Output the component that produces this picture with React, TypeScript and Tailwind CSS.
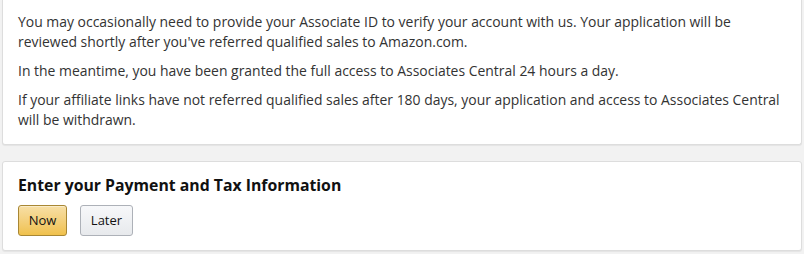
import React from "react";

export default function App() {
  return (
    <div className="w-[804px] h-[254px] bg-[#f2f2f2] overflow-hidden px-[2px] text-[#333]" style={{ fontFamily: '"Open Sans", "Noto Sans", Arial, sans-serif' }}>
      <div className="bg-white border border-t-0 border-[#ddd] rounded-b-[3px] shadow-[0_1px_1px_rgba(0,0,0,0.06)] px-[15px] pt-[12px] pb-[14px] text-[13.94px] leading-[20px]">
        <p className="mb-[9px]">
          You may occasionally need to provide your Associate ID to verify your account with us. Your application will be reviewed shortly after you've referred qualified sales to Amazon.com.
        </p>
        <p className="mb-[9px]">In the meantime, you have been granted the full access to Associates Central 24 hours a day.</p>
        <p>
          If your affiliate links have not referred qualified sales after 180 days, your application and access to Associates Central will be withdrawn.
        </p>
      </div>
      <div className="mt-[16px] bg-white border border-[#ddd] rounded-[3px] shadow-[0_1px_1px_rgba(0,0,0,0.06)] px-[15px] pt-[12px] pb-[14px]">
        <h2 className="text-[15.8px] leading-[22px] font-bold text-[#111]">Enter your Payment and Tax Information</h2>
        <div className="flex gap-[13px] mt-[9px]">
          <button className="h-[31px] w-[49px] rounded-[3px] border border-[#a88734] bg-gradient-to-b from-[#f7dfa5] to-[#f0c14b] text-[13px] text-[#111] shadow-[inset_0_1px_0_rgba(255,255,255,0.4)]">
            Now
          </button>
          <button className="h-[31px] w-[53px] rounded-[3px] border border-[#adb1b8] bg-gradient-to-b from-[#f7f8fa] to-[#e7e9ec] text-[13px] text-[#111]">
            Later
          </button>
        </div>
      </div>
    </div>
  );
}
